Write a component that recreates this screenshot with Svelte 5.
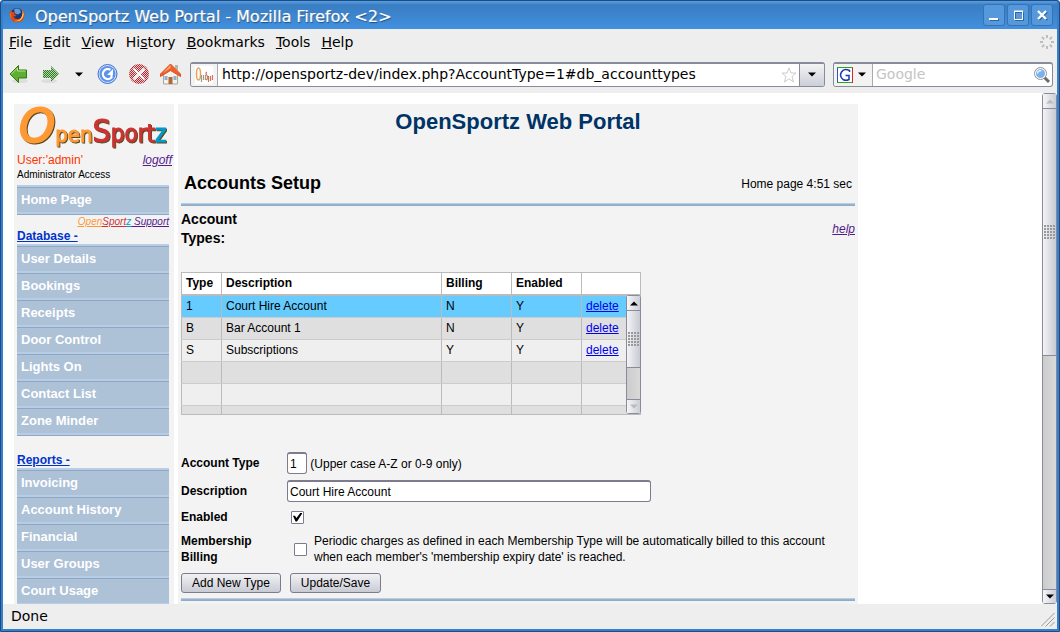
<script>
  const menus = [
    ['', 'F', 'ile'], ['', 'E', 'dit'], ['', 'V', 'iew'], ['Hi', 's', 'tory'],
    ['', 'B', 'ookmarks'], ['', 'T', 'ools'], ['', 'H', 'elp'],
  ];
  const database = ['User Details', 'Bookings', 'Receipts', 'Door Control', 'Lights On', 'Contact List', 'Zone Minder'];
  const reports = ['Invoicing', 'Account History', 'Financial', 'User Groups', 'Court Usage'];
  const rows = [
    { type: '1', description: 'Court Hire Account', billing: 'N', enabled: 'Y' },
    { type: 'B', description: 'Bar Account 1', billing: 'N', enabled: 'Y' },
    { type: 'S', description: 'Subscriptions', billing: 'Y', enabled: 'Y' },
    null, null, null,
  ];

  let url = $state('http://opensportz-dev/index.php?AccountType=1#db_accounttypes');
  let search = $state('');
  let selected = $state(0);
  let accountType = $state('1');
  let description = $state('Court Hire Account');
  let enabled = $state(true);
  let billing = $state(false);

  function select(i) {
    if (!rows[i]) return;
    selected = i;
    accountType = rows[i].type;
    description = rows[i].description;
    enabled = rows[i].enabled === 'Y';
  }
</script>

{#snippet caret(up = false)}
  <svg width="8" height="5" viewBox="0 0 8 5" aria-hidden="true">
    <path d={up ? 'M0 4.5h8L4 .5z' : 'M0 .5h8L4 4.5z'} fill="currentColor" />
  </svg>
{/snippet}

{#snippet navList(items)}
  <ul class="nav">
    {#each items as item}<li><a href="#nav">{item}</a></li>{/each}
  </ul>
{/snippet}

<div class="window">
  <header class="titlebar">
    <svg width="16" height="16" viewBox="0 0 16 16" aria-hidden="true">
      <circle cx="8" cy="7.500" r="6.500" fill="#1c3474" />
      <path d="M5 2.500q3-2 6 0l1 3-3 2-3-1z" fill="#5f9cd8" />
      <path d="M1 3q-1 3 0 7 2 5.500 7.500 5.500T15.500 9Q15.500 4 12 1.500q2 3 1.500 6Q13 12 8.500 12 5 12 4.500 9q2 1 3-.5L5 7l1.500-1.500Q3 5.500 1 3z" fill="#d9481a" />
      <path d="M13.500 3q3 6-1.500 10-3 2-7 1 5 0 7-3t1.500-8z" fill="#fbd04a" />
      <path d="M1.500 5Q1 9 3 12q-3-3-1.500-7z" fill="#f6a02c" />
    </svg>
    <h1>OpenSportz Web Portal - Mozilla Firefox &lt;2&gt;</h1>
    <div class="controls">
      <button aria-label="Minimize"><svg width="22" height="22"><path d="M7 16h9" stroke="#2f669f" stroke-width="2" /><path d="M6 15h9" stroke="#fff" stroke-width="2" /></svg></button>
      <button aria-label="Maximize"><svg width="22" height="22"><path d="M8.500 8.500h8v8h-8z" fill="none" stroke="#2f669f" /><path d="M7.500 7.500h8v8h-8zM7 7h9" fill="none" stroke="#fff" /></svg></button>
      <button aria-label="Close"><svg width="22" height="22"><path d="m8 8 8 8m0-8-8 8" stroke="#2f669f" stroke-width="2.400" /><path d="m7 7 8 8m0-8-8 8" stroke="#fff" stroke-width="2.400" /></svg></button>
    </div>
  </header>

  <nav class="menubar">
    {#each menus as [pre, key, post]}<button>{pre}<u>{key}</u>{post}</button>{/each}
    <svg class="throbber" width="16" height="16" viewBox="-8 -8 16 16" aria-hidden="true">
      {#each [0, 45, 90, 135, 180, 225, 270, 315] as a}
        <path d="M0-7v3" stroke="#bdbdbd" stroke-width="2" transform="rotate({a})" />
      {/each}
    </svg>
  </nav>

  <div class="toolbar">
    <div class="icons">
      <button aria-label="Back">
        <svg width="20" height="20" viewBox="0 0 20 20">
          <ellipse cx="11" cy="17" rx="8" ry="2" fill="#ddd" />
          <path d="M1 10 9.500 1.500V6H17.500v8H9.500v4.500z" fill="#5fae33" stroke="#2f7a0c" />
          <path d="m2.500 10 6-6V7H16.500" fill="none" stroke="#b4e48c" />
        </svg>
      </button>
      <button aria-label="Forward">
        <svg width="20" height="20" viewBox="0 0 20 20">
          <defs><pattern id="gd" width="2" height="2" patternUnits="userSpaceOnUse"><path d="M0 0h1v1H0zM1 1h1v1H1z" fill="#2c7a22" /></pattern></defs>
          <ellipse cx="10" cy="17" rx="8" ry="2" fill="#ddd" />
          <path d="m20 10-8-8v4H4v8h8v4z" fill="#b5d8aa" />
          <path d="m20 10-8-8v4H4v8h8v4z" fill="url(#gd)" />
        </svg>
      </button>
      <button class="history" aria-label="Recent pages">{@render caret()}</button>
      <button aria-label="Reload">
        <svg width="21" height="22" viewBox="0 0 21 22">
          <circle cx="10.500" cy="11" r="9.500" fill="#cfe0fc" stroke="#3f6fd0" />
          <circle cx="10.500" cy="11" r="8" fill="#5d92ea" />
          <path d="M13.500 6.800A5 5 0 1 0 14.500 14.500V11" fill="none" stroke="#fff" stroke-width="2.200" />
          <path d="M10 12h6V6z" fill="#fff" />
        </svg>
      </button>
      <button aria-label="Stop">
        <svg width="22" height="22" viewBox="0 0 22 22">
          <defs><pattern id="rd" width="2" height="2" patternUnits="userSpaceOnUse"><path d="M0 0h1v1H0zM1 1h1v1H1z" fill="#b02a34" /></pattern></defs>
          <circle cx="11" cy="11" r="10" fill="#eccaca" />
          <path d="m6 6 10 10m0-10L6 16" stroke="#f8f6f6" stroke-width="4" />
          <path fill-rule="evenodd" d="M11 1a10 10 0 1 1 0 20 10 10 0 1 1 0-20zM6 4.500 4.500 6l5 5-5 5L6 17.500l5-5 5 5 1.500-1.500-5-5 5-5L16 4.500l-5 5z" fill="url(#rd)" />
        </svg>
      </button>
      <button aria-label="Home">
        <svg width="22" height="22" viewBox="0 0 22 22">
          <path d="M3.500 10v11h14V10l-7-6z" fill="#f3f2f0" stroke="#aaa6a0" />
          <path d="M15 2h3v6l-3-3z" fill="#b9b4ae" />
          <path d="M8.500 14h4v7h-4z" fill="#b06a30" />
          <path d="M4.500 13h3v4h-3zM13.500 13h3v4h-3z" fill="#8faed0" />
          <path d="M10.500 1 .500 11v2.500l10-6 10 6V11z" fill="#f2602a" stroke="#d9531e" />
          <path d="M10.500 2 3 10l7.500-5z" fill="#ffa77c" />
        </svg>
      </button>
    </div>

    <div class="field address">
      <span class="favicon" aria-hidden="true">
        <svg width="18" height="18" viewBox="0 0 18 18">
          <path fill="#fff" d="M0 0h18v18H0z" />
          <ellipse cx="3.500" cy="8" rx="2" ry="6" fill="none" stroke="#e8a05c" stroke-width="1.500" />
          <path d="M6.500 9v7m2-7v5m2-5v5" stroke="#98a08a" stroke-width="1.200" />
          <path d="M12 6q-2 1 0 3.500T11 14m2.500-4v6m2-6v5m2-6v5" fill="none" stroke="#d36f56" stroke-width="1.200" />
        </svg>
      </span>
      <input aria-label="Location" bind:value={url} />
      <button class="star" aria-label="Bookmark this page">
        <svg width="16" height="16" viewBox="0 0 16 16"><path d="m8 1 2 5h5l-4 3.500L12.500 15 8 11.800 3.500 15 5 9.500 1 6h5z" fill="#fff" stroke="#ccc" /></svg>
      </button>
      <button class="drop" aria-label="Show history">{@render caret()}</button>
    </div>

    <div class="field search">
      <button class="engine" aria-label="Search engine">
        <svg width="16" height="16" viewBox="0 0 16 16">
          <path d="M0 0h16v16H0z" fill="#fff" />
          <path d="M.500 16V0" stroke="#2a52be" /><path d="M0 .500h16" stroke="#27a522" />
          <path d="M15.500 1v15" stroke="#d22" /><path d="M0 15.500h15" stroke="#27a522" />
          <path d="M12.500 5V3.500Q7 1 4.500 5T6 12.500q3 1.500 6 0V8.500H8.500" fill="none" stroke="#1a3ca8" stroke-width="1.500" />
        </svg>
        {@render caret()}
      </button>
      <input aria-label="Search" placeholder="Google" bind:value={search} />
      <button aria-label="Go">
        <svg width="18" height="18" viewBox="0 0 18 18">
          <path d="m11 11 5 5" stroke="#6e6a66" stroke-width="3" />
          <circle cx="7.500" cy="7.500" r="6" fill="#fff" stroke="#8b9298" />
          <circle cx="7.500" cy="7.500" r="4.500" fill="#7db1ea" />
          <path d="M4.500 7.500q0-3 4-3" fill="none" stroke="#e4f1ff" stroke-width="1.500" />
        </svg>
      </button>
    </div>
  </div>

  <div class="viewport">
    <div class="page">
      <aside>
        <div class="logo"><span class="o">O</span><span class="y">pen</span><span class="s">S</span><span class="r">port</span><span class="z">z</span></div>
        <div class="user"><span>User:'admin'</span><a class="soft" href="#logoff">logoff</a></div>
        <div class="access">Administrator Access</div>
        {@render navList(['Home Page'])}
        <a class="support" href="#support"><span class="t1">Open</span><span class="t2">Sport</span><span class="t3">z</span> Support</a>
        <h3><a href="#database">Database -</a></h3>
        {@render navList(database)}
        <h3 class="later"><a href="#reports">Reports -</a></h3>
        {@render navList(reports)}
      </aside>

      <main>
        <h2>OpenSportz Web Portal</h2>
        <div class="heading"><h3>Accounts Setup</h3><span>Home page 4:51 sec</span></div>
        <hr />
        <div class="sub"><h4>Account Types:</h4><a class="soft" href="#help">help</a></div>

        <div class="grid">
          <table>
            <colgroup><col class="c1" /><col class="c2" /><col class="c3" /><col class="c3" /><col /></colgroup>
            <thead>
              <tr><th>Type</th><th>Description</th><th>Billing</th><th>Enabled</th><th></th></tr>
            </thead>
            <tbody>
              {#each rows as r, i}
                <tr class:selected={i === selected} onclick={() => select(i)}>
                  <td>{r?.type}</td><td>{r?.description}</td><td>{r?.billing}</td><td>{r?.enabled}</td>
                  <td>{#if r}<a href="#delete">delete</a>{/if}</td>
                </tr>
              {/each}
            </tbody>
          </table>
          <div class="scroll inner">
            <button aria-label="Scroll up">{@render caret(true)}</button>
            <div class="thumb"><i></i></div>
            <div class="track"></div>
            <button class="off" aria-label="Scroll down">{@render caret()}</button>
          </div>
        </div>

        <form onsubmit={(e) => e.preventDefault()}>
          <div class="row text"><label for="type">Account Type</label><div><input id="type" class="short" maxlength="1" bind:value={accountType} /> (Upper case A-Z or 0-9 only)</div></div>
          <div class="row text"><label for="desc">Description</label><div><input id="desc" class="long" bind:value={description} /></div></div>
          <div class="row enabled"><label for="enabled">Enabled</label><div><input id="enabled" type="checkbox" bind:checked={enabled} /></div></div>
          <div class="row billing">
            <label for="billing">Membership Billing</label>
            <div><input id="billing" type="checkbox" bind:checked={billing} />
              <p>Periodic charges as defined in each Membership Type will be automatically billed to this account when each member's 'membership expiry date' is reached.</p></div>
          </div>
          <div class="buttons"><button>Add New Type</button><button>Update/Save</button></div>
        </form>
        <hr />
      </main>
    </div>

    <div class="scroll outer">
      <button class="off" aria-label="Page up">{@render caret(true)}</button>
      <div class="thumb"><i></i></div>
      <div class="track"></div>
      <button aria-label="Page down">{@render caret()}</button>
    </div>
  </div>

  <footer>
    <span>Done</span>
    <svg width="14" height="14" viewBox="0 0 14 14" aria-hidden="true"><path d="M0 13.500 13.500 0M4.500 13.500l9-9M9 13.500 13.500 9" stroke="#999" /></svg>
  </footer>
</div>

<style>
  :global(body) { margin: 0; background: #fff; }
  * { box-sizing: border-box; }
  svg { display: block; flex: none; }
  button { margin: 0; padding: 0; border: 0; background: none; color: #000; font: inherit; }
  input { margin: 0; border: 0; font: inherit; color: #000; outline: 0; }
  h1, h2, h3, h4, p, ul { margin: 0; padding: 0; }

  .window { display: flex; flex-direction: column; height: 100vh; overflow: hidden; padding: 0 2px 2px; border: 1px solid #1d4c80; border-radius: 3px 3px 0 0; background: #367fca; font: 14px "DejaVu Sans", sans-serif; }
  .titlebar { display: flex; align-items: center; flex: none; height: 28px; padding: 0 4px 0 6px; background: linear-gradient(#5a9fe6, #3a7dc2 4px, #4190df); }
  h1 { flex: 1; margin-left: 10px; padding-top: 2px; color: #fff; font-size: 16px; font-weight: normal; text-shadow: 1px 0 0 rgba(255, 255, 255, 0.4), 1px 1px 1px #1d4c80; }
  .controls { display: flex; gap: 2px; }
  .controls button { width: 22px; height: 22px; border-radius: 3px; background: #5698dc; box-shadow: inset 0 0 0 1px #3673b4; }

  .menubar { display: flex; flex: none; align-items: center; gap: 11px; height: 27px; padding: 0 2px 2px 6px; background: #eee; }
  .throbber { margin-left: auto; }
  .toolbar { display: flex; flex: none; align-items: center; gap: 8px; height: 37px; padding: 0 4px 1px 6px; background: #eee; }
  .icons { display: flex; align-items: center; gap: 10px; }
  .history { padding: 0 4px 0 6px; }
  .field { display: flex; align-items: center; height: 25px; border: 1px solid #888b9a; border-top-width: 2px; border-radius: 3px; background: #fff; overflow: hidden; }
  .field input { flex: 1; min-width: 0; padding: 0 0 1px; background: none; }
  .field input::placeholder { color: #c4c4c4; opacity: 1; }
  .address { flex: 1; }
  .favicon { align-self: stretch; padding: 2px 4px; margin-right: 4px; background: #f3f3f3; border-right: 1px solid #aaa; }
  .star { padding: 0 2px; }
  .drop { align-self: stretch; display: grid; place-items: center; width: 25px; border-left: 1px solid #888b9a; background: linear-gradient(#f4f4f6, #ccced8); }
  .search { width: 220px; }
  .engine { display: flex; align-items: center; gap: 5px; align-self: stretch; padding: 0 6px 0 3px; border-right: 1px solid #aaa; background: #f3f3f3; }
  .search input { padding-left: 3px; }
  .search button:last-child { padding-right: 1px; }

  .viewport { display: flex; flex: 1; min-height: 0; background: #fff; font: 12px "Liberation Sans", Arial, sans-serif; }
  .page { display: flex; flex: 1; gap: 4px; min-width: 0; overflow: hidden; padding: 11px 0 0 11px; }
  aside { flex: none; width: 160px; padding: 0 5px 0 3px; background: #f3f3f3; }
  main { display: flex; flex-direction: column; flex: 1; max-width: 680px; padding: 0 3px; background: #f3f3f3; }

  .logo { height: 48px; padding-left: 2px; font: 24px/44px "DejaVu Sans Condensed", "DejaVu Sans", sans-serif; white-space: nowrap; filter: drop-shadow(1px 1px 0 #5a4a20); }
  .logo .o { font-family: "DejaVu Sans", sans-serif; font-size: 46px; font-style: oblique; color: #f93; -webkit-text-stroke: 2px #f93; }
  .logo .s { font-size: 32px; color: #c33; -webkit-text-stroke: 1px #c33; }
  .logo .y { font-size: 22px; color: #f93; -webkit-text-stroke: 1px #f93; }
  .logo .r { color: #c33; -webkit-text-stroke: 1px #c33; }
  .logo .z { color: #09c; -webkit-text-stroke: 1px #09c; }
  .user { display: flex; justify-content: space-between; height: 16px; line-height: 16px; color: #f30; }
  .soft { color: #551a8b; font-style: italic; }
  .user a { margin-right: -3px; }
  .access { height: 17px; font-size: 10px; line-height: 14px; }
  .nav { list-style: none; border-top: 2px solid #b5cde6; border-bottom: 1px solid #91a7c1; }
  .nav li { border-top: 1px solid #91a7c1; border-bottom: 2px solid #b5cde6; background: #adc1d7; }
  .nav a { display: block; padding-left: 4px; color: #fff; font-size: 13px; font-weight: bold; line-height: 24px; text-decoration: none; }
  .support { display: block; color: #551a8b; font-size: 10px; font-style: italic; line-height: 14px; text-align: right; text-decoration: none; }
  .support, .support span { text-decoration: underline; }
  .t1 { color: #f93; }
  .t2 { color: #c33; }
  .t3 { color: #09c; }
  aside h3 { font-size: 12px; line-height: 15px; }
  aside h3 a { color: #03c; }
  aside h3.later { padding-top: 17px; }

  h2 { padding-top: 4px; color: #036; font-size: 22px; line-height: 28px; text-align: center; }
  .heading { display: flex; align-items: center; justify-content: space-between; height: 67px; padding: 28px 3px 0; }
  .heading h3 { font-size: 18px; }
  hr { flex: none; width: 100%; height: 3px; margin: 0; border: 0; background: linear-gradient(#b5cde6 1px, #9ab6d3 1px, #91a7c1); }
  .sub { display: flex; align-items: center; justify-content: space-between; height: 66px; padding-bottom: 20px; }
  h4 { width: 80px; font-size: 14px; line-height: 19px; }

  .grid { position: relative; height: 143px; max-width: 460px; overflow: hidden; border-bottom: 1px solid #bbb; }
  table { width: 100%; table-layout: fixed; border-collapse: collapse; }
  .c1 { width: 40px; }
  .c2 { width: 220px; }
  .c3 { width: 70px; }
  th, td { height: 22px; padding: 0 4px; border: 1px solid #bbb; text-align: left; line-height: 21px; }
  th { background: #fff; border-bottom-width: 2px; }
  td { border-top-color: #ccc; border-bottom-color: #ccc; background: #efefef; }
  tr:nth-child(even) td { background: #dfdfdf; }
  tr.selected td { background: #6cf; }
  td a { color: #00e; }

  .scroll { display: flex; flex-direction: column; width: 15px; border: 1px solid #888b9a; border-radius: 3px; background: #ccc; }
  .scroll button { display: grid; place-items: center; flex: none; height: 14px; background: linear-gradient(90deg, #f6f6f8, #ccced8); }
  .scroll button.off { color: #bbb; }
  .thumb { display: grid; place-items: center; border: solid #888b9a; border-width: 1px 0; background: linear-gradient(90deg, #f4f4f6, #c8cad4); }
  .thumb i { width: 11px; height: 14px; background: radial-gradient(circle at 1px 1px, #999 1px, transparent 1px) 0 0 / 3px 3px; }
  .track { background: linear-gradient(90deg, #ccc, #d9d9d9); }
  .inner { position: absolute; top: 23px; right: 0; bottom: 0; }
  .inner .thumb { flex: 58; }
  .inner .track { flex: 32; }
  .scroll button:last-child { border-top: 1px solid #888b9a; }
  .outer { flex: none; }
  .outer .thumb { flex: 248; }
  .outer .track { flex: 235; }

  form { padding-top: 34px; }
  .row { display: grid; grid-template-columns: 106px 1fr; align-items: center; }
  .row label { font-weight: bold; line-height: 16px; }
  .row.text { height: 28px; }
  .row.text input { height: 22px; padding: 0 2px; border: 1px solid #7c7c8e; border-top-width: 2px; border-radius: 3px; background: #fff; }
  .row.text input.short { width: 20px; }
  .row.text input.long { width: 64%; }
  .row.enabled { height: 24px; }
  .row.billing { height: 40px; }
  .row.billing div { display: flex; align-items: center; gap: 7px; }
  .row.billing label { width: 90px; }
  .row.billing p { flex: 1; line-height: 16px; }
  input[type=checkbox] { display: grid; place-items: center; flex: none; width: 13px; height: 13px; margin-left: 4px; appearance: none; border: 1px solid #7c7c8e; border-radius: 1px; background: #fff; }
  .billing input[type=checkbox] { margin-left: 7px; }
  input[type=checkbox]:checked::after { content: ''; width: 9px; height: 9px; background: #000; clip-path: polygon(0 35%, 22% 35%, 38% 60%, 85% 0, 100% 0, 100% 15%, 45% 100%, 28% 100%); }
  .buttons { display: flex; gap: 9px; padding: 4px 0 5px; }
  .buttons button { height: 20px; padding: 0 10px; border: 1px solid #7c7c8e; border-radius: 3px; background: linear-gradient(#f2f2f4, #c9cbd4); }

  footer { display: flex; align-items: flex-start; justify-content: space-between; flex: none; height: 25px; padding: 4px 2px 0 8px; background: #eee; line-height: 16px; }
  footer svg { align-self: flex-end; margin-bottom: 2px; }
</style>
